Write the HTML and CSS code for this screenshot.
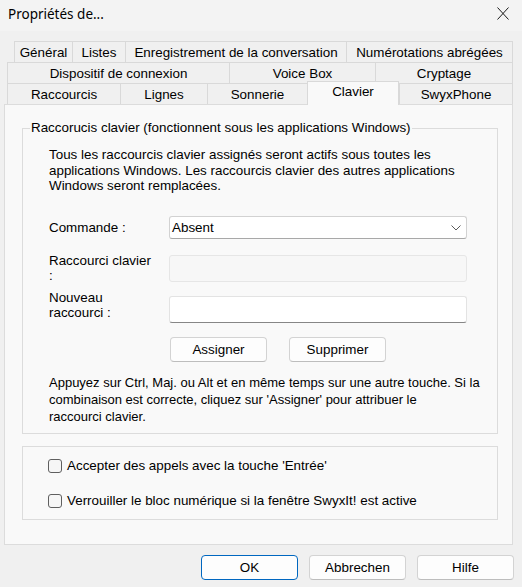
FILE: index.html
```html
<!DOCTYPE html>
<html lang="fr">
<head>
<meta charset="utf-8">
<title>Propriétés de...</title>
<link rel="stylesheet" href="styles.css">
</head>
<body>
<div class="window">
  <div class="titlebar">
    <span class="title">Propriétés de...</span>
    <span class="close">
      <svg width="12" height="13" viewBox="0 0 12 13"><path d="M0.5 0.5 L11.5 12.5 M11.5 0.5 L0.5 12.5" stroke="#1a1a1a" stroke-width="1" fill="none"/></svg>
    </span>
  </div>

  <div class="tabs">
    <div class="tabrow row1">
      <div class="tab t-gen">Général</div>
      <div class="tab t-lis">Listes</div>
      <div class="tab t-enr">Enregistrement de la conversation</div>
      <div class="tab">Numérotations abrégées</div>
    </div>
    <div class="tabrow row2">
      <div class="tab t-dis">Dispositif de connexion</div>
      <div class="tab t-voi">Voice Box</div>
      <div class="tab">Cryptage</div>
    </div>
    <div class="tabrow row3">
      <div class="tab t-rac">Raccourcis</div>
      <div class="tab t-lig">Lignes</div>
      <div class="tab t-son">Sonnerie</div>
      <div class="tab t-cla active">Clavier</div>
      <div class="tab">SwyxPhone</div>
    </div>
  </div>

  <div class="panel">
    <fieldset class="group group-main">
      <legend>Raccorucis clavier (fonctionnent sous les applications Windows)</legend>
      <div class="group-body">
        <p class="desc">Tous les raccourcis clavier assignés seront actifs sous toutes les<br>applications Windows. Les raccourcis clavier des autres applications<br>Windows seront remplacées.</p>

        <div class="form-row row-cmd">
          <span class="flabel">Commande :</span>
          <div class="select">
            <span>Absent</span>
            <svg width="10" height="6" viewBox="0 0 10 6"><path d="M0.5 0.5 L5 5 L9.5 0.5" stroke="#5a5a5a" stroke-width="1" fill="none"/></svg>
          </div>
        </div>

        <div class="form-row row-key">
          <span class="flabel">Raccourci clavier<br>:</span>
          <div class="input disabled"></div>
        </div>

        <div class="form-row row-new">
          <span class="flabel">Nouveau<br>raccourci :</span>
          <div class="input editable"></div>
        </div>

        <div class="actions">
          <button class="btn">Assigner</button>
          <button class="btn">Supprimer</button>
        </div>

        <p class="help">Appuyez sur Ctrl, Maj. ou Alt et en même temps sur une autre touche. Si la<br>combinaison est correcte, cliquez sur 'Assigner' pour attribuer le<br>raccourci clavier.</p>
      </div>
    </fieldset>

    <fieldset class="group group-opts">
      <div class="opts-body">
        <label class="check"><span class="box"></span>Accepter des appels avec la touche 'Entrée'</label>
        <label class="check"><span class="box"></span>Verrouiller le bloc numérique si la fenêtre SwyxIt! est active</label>
      </div>
    </fieldset>
  </div>

  <div class="footer">
    <button class="btn default">OK</button>
    <button class="btn">Abbrechen</button>
    <button class="btn">Hilfe</button>
  </div>
</div>
</body>
</html>
```

FILE: styles.css
```css
html, body {
  margin: 0;
  padding: 0;
}
body {
  background: #f0f0f0;
  font-family: "Liberation Sans", Arial, sans-serif;
  font-size: 13.4px;
  color: #000;
}
.window {
  width: 522px;
  height: 587px;
  display: flex;
  flex-direction: column;
  overflow: hidden;
}

/* title bar */
.titlebar {
  height: 31px;
  flex: 0 0 31px;
  background: #f3f3f3;
  display: flex;
  align-items: center;
  justify-content: space-between;
  padding: 0 13px 0 8px;
  box-sizing: border-box;
}
.title {
  font-family: "Noto Sans", "Open Sans", sans-serif;
  font-size: 13.5px;
  color: #000;
  padding-bottom: 4px;
}
.close {
  display: flex;
  padding-bottom: 5px;
}

/* tabs */
.tabs {
  margin-top: 10px;
}
.tabrow {
  display: flex;
  height: 21px;
}
.row1 {
  margin-left: 14px;
  width: 499px;
}
.row2, .row3 {
  margin-left: 7px;
  width: 506px;
}
.tab {
  box-sizing: border-box;
  height: 21px;
  border-top: 1px solid #d9d9d9;
  border-left: 1px solid #d9d9d9;
  background: #f0f0f0;
  text-align: center;
  line-height: 19px;
  padding-top: 1px;
  white-space: nowrap;
}
.tab:last-child {
  flex: 1;
  border-right: 1px solid #d9d9d9;
}
.t-gen { width: 58px; }
.t-lis { width: 53px; }
.t-enr { width: 221px; }
.t-dis { width: 222px; }
.t-voi { width: 146px; }
.t-rac { width: 113px; }
.t-lig { width: 87px; }
.t-son { width: 100px; }
.t-cla { width: 92px; }
.tab.active {
  position: relative;
  z-index: 2;
  margin-top: -2px;
  height: 24px;
  padding-top: 0;
  line-height: 20px;
  background: #f9f9f9;
  border-right: 1px solid #d9d9d9;
}

/* panel */
.panel {
  margin-left: 4px;
  width: 509px;
  box-sizing: border-box;
  background: #f9f9f9;
  border: 1px solid #dcdcdc;
  padding: 15px 14px 24px 17px;
}
.group {
  margin: 0;
  padding: 0;
  min-width: 0;
  border: 1px solid #dcdcdc;
}
.group legend {
  margin-left: 7px;
  padding: 0 1px;
  line-height: 16px;
}
.group-body {
  padding: 11px 0 8px 26px;
}
.desc {
  margin: 0;
  line-height: 15.5px;
  white-space: nowrap;
}
.form-row {
  display: flex;
  align-items: center;
}
.flabel {
  flex: 0 0 120px;
  line-height: 15px;
}
.row-cmd {
  margin-top: 22.5px;
}
.row-key {
  margin-top: 14px;
}
.row-new {
  margin-top: 7px;
  align-items: flex-start;
}
.select {
  width: 298px;
  height: 23px;
  box-sizing: border-box;
  background: #fff;
  border: 1px solid #d2d2d2;
  border-bottom-color: #a8a8a8;
  border-radius: 3px;
  display: flex;
  align-items: center;
  justify-content: space-between;
  padding: 0 5px 0 2px;
}
.select svg {
  margin-top: 1px;
}
.input {
  width: 298px;
  height: 27px;
  box-sizing: border-box;
  border-radius: 3px;
}
.input.disabled {
  background: #f7f7f7;
  border: 1px solid #e6e6e6;
}
.input.editable {
  margin-top: 6px;
  background: #fff;
  border: 1px solid #e3e3e3;
  border-bottom: 1px solid #868686;
}
.actions {
  display: flex;
  gap: 22px;
  margin-top: 14px;
  padding-left: 121px;
}
.btn {
  width: 97px;
  height: 25px;
  box-sizing: border-box;
  padding: 0;
  background: #fdfdfd;
  border: 1px solid #d3d3d3;
  border-bottom-color: #bdbdbd;
  border-radius: 4px;
  font-family: inherit;
  font-size: 13.4px;
  color: #000;
}
.btn.default {
  border-color: #0067c0;
}
.help {
  margin: 12px 0 0;
  line-height: 17px;
  font-size: 13px;
  white-space: nowrap;
}

/* options group */
.group-opts {
  margin-top: 12px;
}
.opts-body {
  display: flex;
  flex-direction: column;
  gap: 18px;
  padding: 10px 0 10px 25px;
}
.check {
  display: flex;
  align-items: center;
  line-height: 17px;
}
.box {
  width: 14px;
  height: 14px;
  box-sizing: border-box;
  border: 1px solid #5f5f5f;
  border-radius: 3px;
  background: #f6f6f6;
  margin-right: 5px;
}

/* footer */
.footer {
  display: flex;
  justify-content: flex-end;
  gap: 11px;
  padding: 10px 8px 0 0;
}
```
